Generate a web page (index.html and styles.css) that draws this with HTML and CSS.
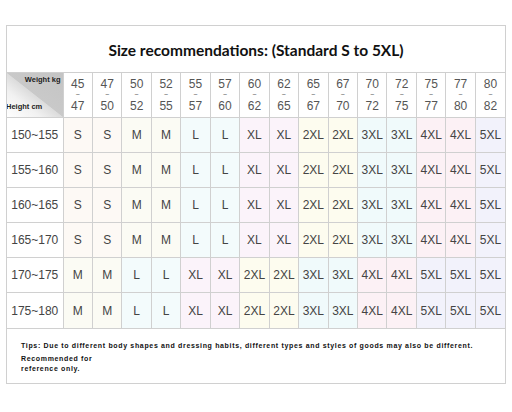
FILE: index.html
```html
<!DOCTYPE html>
<html lang="en">
<head>
    <meta charset="UTF-8">
    <meta name="viewport" content="width=device-width, initial-scale=1.0">
    <title>Size Chart</title>
    <link rel="stylesheet" href="styles.css">
</head>
<body>
    <div class="chart">
        <div class="chart-title">Size recommendations: (Standard S to 5XL)</div>
        <table class="size-table" id="size-table">
            <colgroup>
                <col class="col-height">
            </colgroup>
            <thead>
                <tr id="weight-row">
                    <th class="corner">
                        <div class="corner-inner">
                            <span class="corner-weight">Weight kg</span>
                            <span class="corner-height">Height cm</span>
                        </div>
                    </th>
                </tr>
            </thead>
            <tbody></tbody>
        </table>
        <div class="tips">
            <p class="tips-line">Tips: Due to different body shapes and dressing habits, different types and styles of goods may also be different.</p>
            <p class="tips-note">Recommended for<br>reference only.</p>
        </div>
    </div>

    <script>
        const weights = [
            [45, 47], [47, 50], [50, 52], [52, 55], [55, 57], [57, 60], [60, 62], [62, 65],
            [65, 67], [67, 70], [70, 72], [72, 75], [75, 77], [77, 80], [80, 82]
        ];
        const small = ['S', 'S', 'M', 'M', 'L', 'L', 'XL', 'XL', '2XL', '2XL', '3XL', '3XL', '4XL', '4XL', '5XL'];
        const large = ['M', 'M', 'L', 'L', 'XL', 'XL', '2XL', '2XL', '3XL', '3XL', '4XL', '4XL', '5XL', '5XL', '5XL'];
        const rows = [
            { height: '150~155', sizes: small },
            { height: '155~160', sizes: small },
            { height: '160~165', sizes: small },
            { height: '165~170', sizes: small },
            { height: '170~175', sizes: large },
            { height: '175~180', sizes: large }
        ];

        const weightRow = document.querySelector('#weight-row');
        const tableBody = document.querySelector('#size-table tbody');

        function renderChart() {
            weights.forEach(w => {
                const th = document.createElement('th');
                th.className = 'weight';
                th.innerHTML = `<span>${w[0]}</span><span class="tilde">~</span><span>${w[1]}</span>`;
                weightRow.appendChild(th);
            });

            rows.forEach(row => {
                const tr = document.createElement('tr');
                let cells = `<td class="height">${row.height}</td>`;
                row.sizes.forEach(size => {
                    cells += `<td class="size sz-${size.toLowerCase()}">${size}</td>`;
                });
                tr.innerHTML = cells;
                tableBody.appendChild(tr);
            });
        }

        renderChart();
    </script>
</body>
</html>
```

FILE: styles.css
```css
body {
    margin: 0;
    background-color: #fff;
    font-family: "Liberation Sans", Arial, sans-serif;
    color: #333;
}

.chart {
    width: 500px;
    margin: 25px 0 0 6px;
    border: 1px solid #d0d0d0;
    box-sizing: border-box;
}

.chart-title {
    height: 47px;
    display: flex;
    align-items: center;
    justify-content: center;
    padding-top: 1px;
    box-sizing: border-box;
    font-family: Lato, sans-serif;
    font-weight: bold;
    font-size: 15.5px;
    color: #111;
    border-bottom: 1px solid #cfcfcf;
}

.size-table {
    width: 100%;
    table-layout: fixed;
    border-collapse: collapse;
    border-style: hidden;
}

.size-table .col-height {
    width: 56px;
}

.size-table th, .size-table td {
    border: 1px solid #d0d0d0;
    padding: 0;
    text-align: center;
}

.size-table thead tr {
    height: 44px;
}

.size-table tbody tr {
    height: 35.2px;
}

.corner {
    background: linear-gradient(to top right, #fff 0%, #f1f1f1 30%, #dcdcdc 49.5%, #c9c9c9 50.5%, #c4c4c4 100%);
    overflow: hidden;
}

.corner-inner {
    height: 43px;
    display: flex;
    flex-direction: column;
    justify-content: space-between;
    padding: 2px 2px 4px 0;
    box-sizing: border-box;
    font-size: 7.5px;
    line-height: 10px;
    font-weight: bold;
    color: #222;
}

.corner-weight {
    text-align: right;
}

.corner-height {
    text-align: left;
    margin-left: -1px;
}

.weight {
    font-weight: normal;
    font-size: 12px;
    color: #555;
}

.weight span {
    display: block;
    line-height: 12px;
}

.weight .tilde {
    font-size: 7px;
    line-height: 9.7px;
}

.height, .size {
    font-size: 12px;
    color: #444;
}

.sz-s { background-color: #fdf9f5; }
.sz-m { background-color: #fbfbf4; }
.sz-l { background-color: #f3fbfc; }
.sz-xl { background-color: #fbf3fa; }
.sz-2xl { background-color: #fdfcef; }
.sz-3xl { background-color: #f0fafb; }
.sz-4xl { background-color: #fcf1f5; }
.sz-5xl { background-color: #f2f2fb; }

.tips {
    height: 55px;
    padding: 12px 0 0 14px;
    box-sizing: border-box;
    border-top: 1px solid #d0d0d0;
    font-size: 7px;
    font-weight: bold;
    letter-spacing: 0.66px;
    color: #111;
}

.tips p {
    margin: 0;
}

.tips-line {
    line-height: 10px;
}

.tips-note {
    margin-top: 3px !important;
    line-height: 10px;
}
```
